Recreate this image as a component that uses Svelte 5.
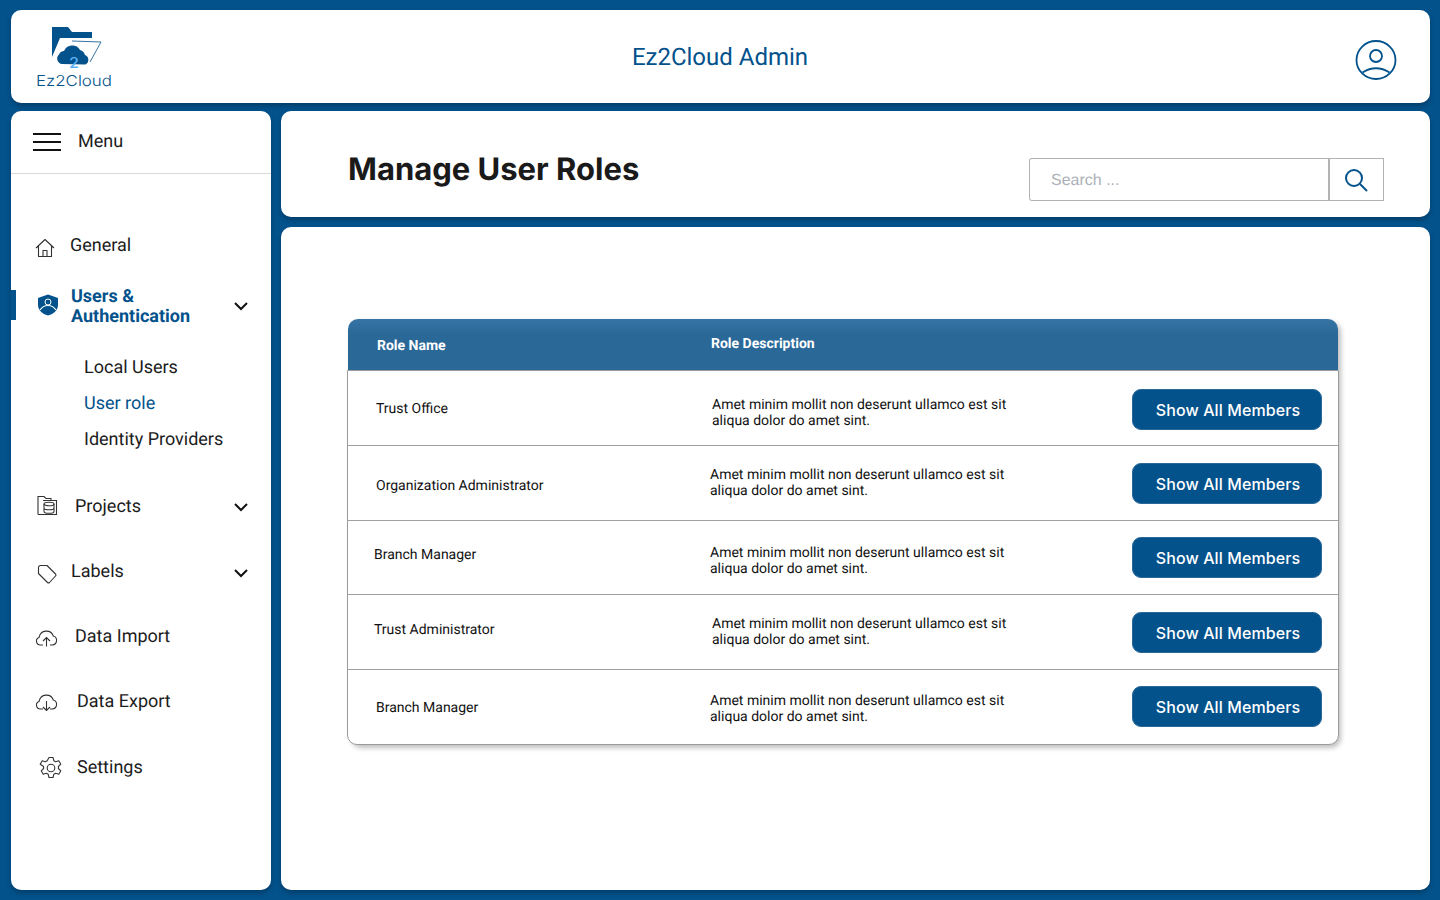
<script>
  const blue = '#03528c';
  const lorem = ['Amet minim mollit non deserunt ullamco est sit', 'aliqua dolor do amet sint.'];

  // the offsets are per row because the rows are not evenly aligned
  const roles = [
    { name: 'Trust Office', h: 75, nameX: 27, nameY: 30, descX: 2, descY: 26, btnY: 18 },
    { name: 'Organization Administrator', h: 75, nameX: 27, nameY: 32, descX: 0, descY: 21, btnY: 17 },
    { name: 'Branch Manager', h: 74, nameX: 25, nameY: 26, descX: 0, descY: 24, btnY: 16 },
    { name: 'Trust Administrator', h: 75, nameX: 25, nameY: 27, descX: 2, descY: 21, btnY: 17 },
    { name: 'Branch Manager', h: 74, nameX: 27, nameY: 30, descX: 0, descY: 23, btnY: 16 },
  ];

  const subItems = [
    { label: 'Local Users' },
    { label: 'User role', active: true },
    { label: 'Identity Providers' },
  ];
</script>

{#snippet chevron()}
  <svg class="chevron" width="16" height="10" viewBox="0 0 16 10" fill="none" stroke="#111" stroke-width="2">
    <path d="M2 2l6 6 6-6" />
  </svg>
{/snippet}

<div class="page">
  <header class="card topbar">
    <div class="logo">
      <svg width="80" height="64" viewBox="0 0 80 64">
        <path d="M16 1h16l4 5h20v6H24L16 31z" fill={blue} />
        <path d="M36 15l29 1-11 20" fill="none" stroke={blue} stroke-width="0.800" />
        <path d="M26 38a5.500 5.500 0 0 1-3-9.500 6 6 0 0 1 5-3.500 9 9 0 0 1 16-1 7 7 0 0 1 5 5 5.200 5.200 0 0 1 .5 9.500z" fill={blue} />
        <text x="33" y="42" textLength="10" lengthAdjust="spacingAndGlyphs" class="logo-two">2</text>
        <text x="0" y="60" textLength="76" lengthAdjust="spacingAndGlyphs" class="logo-word">Ez2Cloud</text>
      </svg>
    </div>
    <div class="app-title">Ez2Cloud Admin</div>
    <svg class="avatar" width="42" height="42" viewBox="0 0 42 42" fill="none" stroke={blue} stroke-width="1.800">
      <ellipse cx="21" cy="21" rx="19.500" ry="19" />
      <circle cx="21" cy="17" r="6" />
      <path d="M7.500 33.500Q21 25 34.500 33.500" />
    </svg>
  </header>

  <aside class="card sidebar">
    <div class="menu-head">
      <svg width="28" height="19" viewBox="0 0 28 19" stroke="#111" stroke-width="2">
        <path d="M0 1h28M0 9h28M0 17h28" />
      </svg>
      <span>Menu</span>
    </div>

    <nav>
      <a class="item general">
        <svg width="20" height="20" viewBox="0 0 20 20" fill="none" stroke="#333" stroke-width="1.100" style="margin: 6px 0 0 24px">
          <path d="M1 10l9-8.500L19 10M3.500 8v10.500h13V8M8 18.500v-6h4v6" stroke-linejoin="round" />
        </svg>
        <span style="margin-left: 15px">General</span>
      </a>

      <a class="item users">
        <span class="active-bar"></span>
        <svg width="22" height="22" viewBox="0 0 22 22" style="margin: 0 0 0 26px">
          <path d="M11 0.500l10 3.500v7c0 5-4 9-10 10.500C5 20 1 16 1 11V4z" fill={blue} />
          <circle cx="11" cy="8" r="3" fill="none" stroke="#fff" stroke-width="1" />
          <path d="M3 16c2-3 4.500-4.500 8-4.500s6 1.500 8 4.500" fill="none" stroke="#fff" stroke-width="1.200" />
        </svg>
        <span class="users-label">Users &amp;<br />Authentication</span>
        {@render chevron()}
      </a>

      <div class="sub">
        {#each subItems as s}
          <a class="sub-item" class:active={s.active}>{s.label}</a>
        {/each}
      </div>

      <a class="item projects">
        <svg width="21" height="21" viewBox="0 0 21 21" fill="none" stroke="#333" stroke-width="1.100" style="margin: -2px 0 0 26px">
          <path d="M1 19.500V1.500h6l2 2h5v2" />
          <path d="M1 19.500h18.500V5.500H6" />
          <ellipse cx="12" cy="9" rx="5" ry="1.800" />
          <path d="M7 9v7.500c0 2.400 10 2.400 10 0V9M7 13c0 2.300 10 2.300 10 0" />
        </svg>
        <span style="margin-left: 17px">Projects</span>
        {@render chevron()}
      </a>

      <a class="item labels">
        <svg width="20" height="20" viewBox="0 0 20 20" fill="none" stroke="#333" stroke-width="1.100" style="margin: 4px 0 0 26px">
          <path d="M1.500 3.500a2 2 0 0 1 2-2h6.500l8.500 8.500a1.500 1.500 0 0 1 0 2l-6 6.500a1.500 1.500 0 0 1-2 0L1.500 9.500z" stroke-linejoin="round" />
        </svg>
        <span style="margin-left: 14px">Labels</span>
        {@render chevron()}
      </a>

      <a class="item">
        <svg width="21" height="19" viewBox="0 0 21 19" fill="none" stroke="#333" stroke-width="1.100" style="margin: 1px 0 0 25px">
          <path d="M7 17H4.500a4 4 0 0 1-1.300-7.800A7.300 7.300 0 0 1 17.300 8a4.600 4.600 0 0 1-1 9H14" />
          <path d="M10.500 18.500V9.500M7 13l3.500-3.500L14 13" />
        </svg>
        <span style="margin-left: 18px">Data Import</span>
      </a>

      <a class="item">
        <svg width="21" height="19" viewBox="0 0 21 19" fill="none" stroke="#333" stroke-width="1.100" style="margin: -1px 0 0 25px">
          <path d="M7 17H4.500a4 4 0 0 1-1.300-7.800A7.300 7.300 0 0 1 17.300 8a4.600 4.600 0 0 1-1 9H14" />
          <path d="M10.500 9v9.500M7 15l3.500 3.500L14 15" />
        </svg>
        <span style="margin-left: 20px">Data Export</span>
      </a>

      <a class="item">
        <svg width="24" height="24" viewBox="0 0 24 24" fill="none" stroke="#333" stroke-width="1.100" style="margin: 2px 0 0 28px">
          <path d="M10 1.500h4l.8 3.200 1.800 1 3.200-.9 2 3.400-2.400 2.300v2l2.400 2.300-2 3.400-3.200-.9-1.800 1-.8 3.200h-4l-.8-3.200-1.800-1-3.200.9-2-3.400 2.400-2.300v-2L1.200 8.200l2-3.400 3.200.9 1.800-1z" stroke-linejoin="round" />
          <circle cx="12" cy="12" r="3.800" />
        </svg>
        <span style="margin: 2px 0 0 14px">Settings</span>
      </a>
    </nav>
  </aside>

  <div class="main">
    <section class="card title-card">
      <h1>Manage User Roles</h1>
      <div class="search">
        <div class="search-input">Search ...</div>
        <div class="search-btn">
          <svg width="24" height="24" viewBox="0 0 24 24" fill="none" stroke={blue} stroke-width="2">
            <circle cx="10" cy="10" r="8" />
            <path d="M16 16l7 7" />
          </svg>
        </div>
      </div>
    </section>

    <section class="card content">
      <div class="table">
        <div class="thead">
          <span class="th-name">Role Name</span>
          <span class="th-desc">Role Description</span>
        </div>
        <div class="tbody">
          {#each roles as r}
            <div class="row" style="height: {r.h}px">
              <div class="name" style="padding: {r.nameY}px 0 0 {r.nameX + 1}px">{r.name}</div>
              <div class="desc" style="padding: {r.descY}px 0 0 {r.descX}px">{lorem[0]}<br />{lorem[1]}</div>
              <button style="margin-top: {r.btnY}px">Show All Members</button>
            </div>
          {/each}
        </div>
      </div>
    </section>
  </div>
</div>

<style>
  :global(body) {
    background: #03528c;
    font-family: Roboto, sans-serif;
    color: #1c1c1c;
    text-rendering: geometricPrecision;
  }
  .page {
    height: 900px;
    box-sizing: border-box;
    padding: 10px 10px 10px 11px;
    display: grid;
    grid-template-columns: 260px 1149px;
    grid-template-rows: 93px 779px;
    column-gap: 10px;
    row-gap: 8px;
  }
  .card {
    background: #fff;
    border-radius: 10px;
    box-shadow: 0 3px 5px rgba(0, 0, 0, 0.25);
  }
  .topbar {
    grid-column: 1 / 3;
    display: flex;
    align-items: flex-start;
    position: relative;
  }
  .logo {
    padding: 16px 0 0 25px;
    line-height: 0;
  }
  .logo-two {
    font-family: Inter, sans-serif;
    font-size: 15px;
    font-weight: 500;
    fill: #5ab0f5;
  }
  .logo-word {
    font-family: Inter, sans-serif;
    font-size: 15px;
    font-weight: 300;
    fill: #03528c;
  }
  .app-title {
    position: absolute;
    left: 0;
    right: 1px;
    top: 32px;
    text-align: center;
    font-size: 24px;
    line-height: 30px;
    color: #03528c;
  }
  .avatar {
    margin: 29px 33px 0 auto;
  }

  .sidebar {
    display: flex;
    flex-direction: column;
    overflow: hidden;
  }
  .menu-head {
    height: 62px;
    flex: none;
    display: flex;
    align-items: center;
    gap: 17px;
    padding-left: 22px;
    border-bottom: 1px solid #d9d9d9;
    font-size: 18px;
  }
  .menu-head span {
    margin-top: -2px;
  }
  nav {
    padding-top: 39px;
    font-size: 18px;
  }
  .item {
    height: 65px;
    display: flex;
    align-items: center;
    position: relative;
  }
  .general {
    height: 64px;
  }
  .users {
    height: 44px;
    margin-top: 6px;
    color: #03528c;
  }
  .active-bar {
    position: absolute;
    left: 0;
    top: 7px;
    width: 5px;
    height: 30px;
    background: #03528c;
  }
  .users-label {
    margin-left: 12px;
    margin-top: 3px;
    font-weight: 700;
    line-height: 20px;
  }
  .chevron {
    position: absolute;
    right: 22px;
    top: 50%;
    margin-top: -5px;
  }
  .users .chevron {
    margin-top: -4px;
  }
  .labels .chevron {
    margin-top: -4px;
  }
  .sub {
    margin-top: 22px;
    padding-bottom: 17px;
  }
  .sub-item {
    display: block;
    height: 36px;
    line-height: 38px;
    padding-left: 73px;
  }
  .sub-item.active {
    color: #03528c;
  }

  .main {
    display: flex;
    flex-direction: column;
    gap: 10px;
  }
  .title-card {
    height: 106px;
    flex: none;
    display: flex;
    align-items: flex-start;
    justify-content: space-between;
    padding: 0 46px 0 67px;
    box-sizing: border-box;
  }
  h1 {
    margin: 39px 0 0;
    font-family: Inter, sans-serif;
    font-size: 31px;
    line-height: 40px;
    font-weight: 700;
    color: #1a1a1a;
  }
  .search {
    display: flex;
    margin-top: 47px;
    height: 43px;
  }
  .search-input {
    width: 301px;
    box-sizing: border-box;
    padding: 1px 0 0 21px;
    border: 1px solid #b3b3b3;
    border-right-width: 2px;
    border-radius: 3px 0 0 3px;
    font-family: 'Liberation Sans', sans-serif;
    font-size: 16px;
    line-height: 41px;
    color: #adb1b8;
  }
  .search-btn {
    width: 54px;
    box-sizing: border-box;
    border: 1px solid #b3b3b3;
    border-left: 0;
    display: flex;
    align-items: center;
    justify-content: center;
    padding-right: 2px;
  }

  .content {
    flex: 1;
    padding: 92px 92px 0 67px;
  }
  .table {
    box-shadow: 3px 3px 5px rgba(0, 0, 0, 0.25);
    border-radius: 10px;
  }
  .thead {
    height: 51px;
    box-sizing: border-box;
    border-radius: 10px 10px 0 0;
    background: linear-gradient(#3674a5, #2a6898 16px);
    color: #fff;
    font-size: 14px;
    font-weight: 700;
    display: flex;
  }
  .th-name {
    width: 334px;
    padding: 19px 0 0 29px;
  }
  .th-desc {
    padding-top: 17px;
  }
  .tbody {
    margin: 0 -1px 0 -1px;
    border: 1px solid #9a9a9a;
    border-radius: 0 0 10px 10px;
    background: #fff;
  }
  .row {
    display: grid;
    grid-template-columns: 362px 1fr 190px;
    padding-right: 16px;
    box-sizing: border-box;
    border-bottom: 1px solid #a0a0a0;
    font-size: 14px;
    line-height: 16px;
    color: #111;
  }
  .row:last-child {
    border-bottom: 0;
  }
  button {
    height: 41px;
    border: 1px solid #2a6898;
    border-radius: 9px;
    background: #03528c;
    color: #fff;
    font-family: Inter, sans-serif;
    font-size: 16px;
    font-weight: 500;
    letter-spacing: 0.1px;
    padding: 0 0 0 2px;
  }
</style>
